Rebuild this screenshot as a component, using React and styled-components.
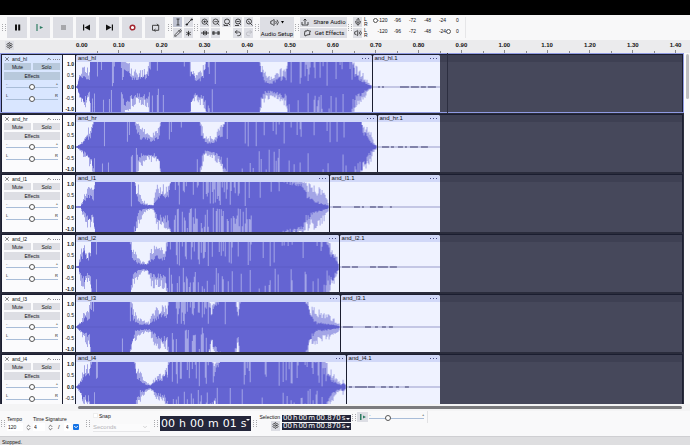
import React from 'react';
import styled, { createGlobalStyle } from 'styled-components';
import {
  Asterisk,
  ChevronDown,
  ChevronUp,
  ChevronsUpDown,
  Mic,
  Pencil,
  Redo2,
  Settings,
  Undo2,
  Volume2,
  X,
  ZoomIn,
  ZoomOut,
} from 'lucide-react';

const CLIP_END = 364;
const VIEW_END = 606;

// wave points: [x, body height, peak height, share of lighter columns]
const tracks = [
  {
    name: 'and_hl',
    selected: true,
    split: 296,
    dashes: [[5, 2], [9, 2], [27, 9], [38, 8], [48, 5], [55, 8]],
    wave: [
      [0, 0, 0, 0], [1, 0.05, 0.1, 0], [4, 0.5, 0.75, 0], [9, 0.5, 0.9, 0],
      [13, 0.25, 0.7, 0], [14, 1, 1.3, 0.2], [24, 1.2, 1.3, 0.15],
      [44, 1.2, 1.3, 0.2], [47, 0.7, 1.1, 0.4], [53, 0.5, 1, 0.2],
      [59, 0.35, 0.7, 0], [67, 0.4, 0.8, 0], [72, 0.5, 0.95, 0.2],
      [73, 1.2, 1.3, 0.12], [113, 1.2, 1.3, 0.02], [115, 0.7, 0.95, 0.2],
      [119, 0.3, 0.5, 0], [123, 0.35, 0.7, 0], [128, 0.6, 0.95, 0.2],
      [132, 1.2, 1.3, 0.3], [142, 1.2, 1.3, 0], [182, 1.2, 1.3, 0],
      [185, 0.6, 0.95, 0.1], [189, 0.2, 0.6, 0], [196, 0.18, 0.4, 0],
      [204, 0.35, 0.8, 0], [210, 0.4, 0.8, 0], [212, 1.1, 1.2, 0.2],
      [245, 1.1, 1.2, 0.4], [274, 1.1, 1.2, 0.3], [280, 0.5, 0.95, 0.2],
      [287, 0.2, 0.6, 0], [292, 0.08, 0.2, 0], [296, 0.02, 0.04, 0],
    ],
  },
  {
    name: 'and_hr',
    split: 301,
    dashes: [[4, 7], [13, 3], [20, 5], [27, 2], [32, 8], [43, 7]],
    wave: [
      [0, 0, 0, 0], [4, 0.08, 0.15, 0], [9, 0.3, 0.6, 0],
      [14, 0.5, 0.9, 0], [18, 1, 1.2, 0.2], [28, 1.2, 1.3, 0.06],
      [57, 1.2, 1.3, 0.12], [60, 0.7, 1.1, 0.4], [64, 0.35, 0.9, 0.1],
      [72, 0.3, 0.6, 0], [78, 0.3, 0.7, 0], [83, 0.5, 0.9, 0],
      [86, 1.2, 1.3, 0.08], [122, 1.2, 1.3, 0.02], [126, 0.5, 0.95, 0.1],
      [129, 0.18, 0.4, 0], [137, 0.2, 0.45, 0], [143, 0.4, 0.8, 0],
      [149, 0.9, 1.1, 0.1], [153, 1.2, 1.3, 0.06], [186, 1.2, 1.3, 0.15],
      [195, 1.2, 1.3, 0.4], [214, 1.2, 1.3, 0.3], [222, 1.2, 1.3, 0.12],
      [282, 1.2, 1.3, 0.12], [286, 0.8, 1, 0.3], [291, 0.5, 0.9, 0.1],
      [295, 0.2, 0.6, 0], [298, 0.08, 0.2, 0], [301, 0.03, 0.05, 0],
    ],
  },
  {
    name: 'and_l1',
    split: 253,
    dashes: [[3, 8], [24, 6], [32, 2], [40, 6], [48, 5], [60, 2]],
    wave: [
      [0, 0, 0, 0], [4, 0, 0.02, 0], [8, 0.3, 0.6, 0], [12, 0.5, 0.9, 0],
      [17, 0.35, 0.7, 0], [19, 1.1, 1.3, 0.2], [24, 1.2, 1.3, 0],
      [56, 1.2, 1.3, 0.06], [59, 0.8, 1, 0.3], [62, 0.2, 0.9, 0],
      [67, 0.08, 0.3, 0], [72, 0.05, 0.1, 0], [77, 0.05, 0.1, 0],
      [80, 0.4, 0.9, 0], [86, 0.5, 0.98, 0], [92, 0.5, 0.9, 0],
      [95, 1.1, 1.2, 0.4], [130, 1.1, 1.2, 0.55], [172, 1.1, 1.2, 0.45],
      [180, 1.2, 1.2, 0.05], [205, 1, 1.2, 0.05], [225, 0.8, 1.1, 0.05],
      [230, 0.5, 0.98, 0], [240, 0.2, 0.9, 0], [248, 0.1, 0.6, 0],
      [253, 0.02, 0.15, 0],
    ],
  },
  {
    name: 'and_l2',
    split: 263,
    dashes: [[2, 8], [12, 6], [30, 6], [38, 10], [50, 7]],
    wave: [
      [0, 0, 0, 0], [2, 0.02, 0.04, 0], [5, 0.4, 0.8, 0],
      [8, 0.6, 1, 0], [11, 0.35, 0.6, 0], [14, 0.5, 0.98, 0.2],
      [16, 1.2, 1.3, 0.2], [22, 1.2, 1.3, 0], [53, 1.2, 1.3, 0.02],
      [56, 0.4, 0.95, 0.1], [60, 0.2, 0.6, 0], [65, 0.1, 0.25, 0],
      [71, 0.1, 0.15, 0], [75, 0.35, 0.8, 0], [80, 0.4, 0.95, 0],
      [89, 0.35, 0.9, 0], [92, 1.1, 1.3, 0.3], [115, 1.1, 1.3, 0.45],
      [154, 1.1, 1.3, 0.35], [160, 1.2, 1.3, 0.15], [235, 1.2, 1.3, 0.2],
      [248, 1, 1.3, 0.3], [254, 0.6, 1, 0.2], [258, 0.4, 0.7, 0],
      [261, 0.2, 0.4, 0], [263, 0.03, 0.05, 0],
    ],
  },
  {
    name: 'and_l3',
    split: 264,
    dashes: [[2, 10], [24, 6], [34, 3], [41, 4], [48, 4]],
    wave: [
      [0, 0, 0, 0], [4, 0.15, 0.25, 0], [8, 0.35, 0.7, 0],
      [13, 0.3, 0.9, 0], [15, 1.2, 1.3, 0.2], [20, 1.2, 1.3, 0],
      [52, 1.2, 1.3, 0.02], [56, 0.5, 0.95, 0.1], [59, 0.18, 0.6, 0],
      [66, 0.1, 0.3, 0], [73, 0.08, 0.2, 0], [77, 0.3, 0.7, 0],
      [84, 0.5, 0.95, 0], [91, 0.5, 0.95, 0], [93, 1.1, 1.3, 0.35],
      [112, 1.1, 1.3, 0.55], [130, 1.1, 1.3, 0.5], [135, 0.6, 0.95, 0.1],
      [140, 0.8, 1.1, 0], [146, 1.1, 1.3, 0], [157, 1.1, 1.3, 0.1],
      [162, 0.5, 0.9, 0], [165, 1.2, 1.3, 0], [227, 1.2, 1.3, 0],
      [233, 0.6, 0.98, 0], [237, 0.3, 0.85, 0], [241, 0.15, 0.75, 0],
      [253, 0.1, 0.5, 0], [264, 0.02, 0.12, 0],
    ],
  },
  {
    name: 'and_l4',
    split: 270,
    cut: true,
    dashes: [[2, 3], [8, 12], [21, 7], [34, 5], [42, 4], [49, 3], [58, 4]],
    wave: [
      [0, 0, 0, 0], [3, 0.1, 0.2, 0], [7, 0.5, 0.9, 0],
      [13, 0.5, 0.95, 0], [17, 1.2, 1.3, 0.2], [24, 1.2, 1.3, 0.03],
      [57, 1.2, 1.3, 0.02], [60, 0.5, 0.95, 0.1], [65, 0.25, 0.6, 0],
      [69, 0.1, 0.25, 0], [74, 0.03, 0.08, 0], [80, 0.25, 0.5, 0],
      [87, 0.35, 0.6, 0], [91, 0.6, 0.95, 0.1], [94, 1.1, 1.3, 0.3],
      [110, 1.1, 1.3, 0.5], [134, 1.1, 1.3, 0.4], [138, 0.6, 0.95, 0.1],
      [145, 1.1, 1.2, 0.1], [200, 1.1, 1.3, 0.12], [212, 1.1, 1.3, 0.4],
      [246, 1, 1.3, 0.4], [253, 0.4, 0.9, 0.1], [260, 0.15, 0.4, 0],
      [265, 0.05, 0.12, 0], [267, 0.15, 0.3, 0], [270, 0.03, 0.05, 0],
    ],
  },
];

const createRandom = (seed) => {
  let value = seed;
  return () => {
    value = (value * 16807) % 2147483647;
    return value / 2147483647;
  };
};

const buildWave = (points, width, seed) => {
  const random = createRandom(seed * 7919 + 13);
  let body = '';
  let peak = '';
  let index = 0;
  for (let x = 0; x < width; x += 1) {
    while (index < points.length - 2 && points[index + 1][0] <= x) index += 1;
    const from = points[index];
    const to = points[index + 1];
    const part = Math.min(1, (x - from[0]) / (to[0] - from[0]));
    const [inner, outer, streak] = [1, 2, 3].map(
      (k) => from[k] + (to[k] - from[k]) * part,
    );
    const heights = [0, 1].map(() => {
      const rough = outer < 1 ? 0.5 : 0.15;
      const high = Math.min(1, outer * (1 - random() * rough));
      let low = Math.min(high, inner * (1.2 - random() * (rough + 0.1)));
      if (random() < streak) low *= random() * 0.9;
      return [low * 25, high * 25];
    });
    const [[lowUp, highUp], [lowDown, highDown]] = heights;
    peak += `M${x} ${25 - highUp}h1V${26 + highDown}h-1z`;
    body += `M${x} ${25 - lowUp}h1V${26 + lowDown}h-1z`;
  }
  return { body, peak };
};

const Waveform = ({ points, width, seed }) => {
  const { body, peak } = buildWave(points, width, seed);
  return (
    <Wave viewBox={`0 0 ${width} 51`} preserveAspectRatio="none">
      <path d={peak} fill="#a3a5e6" />
      <path d={body} fill="#6464d2" />
      <path d={`M0 25h${width}v1H0z`} fill="#5555bd" opacity="0.5" />
    </Wave>
  );
};

const Silence = ({ dashes, width }) => (
  <Wave viewBox={`0 0 ${width} 51`} preserveAspectRatio="none">
    <path d={`M0 25h${width}v1H0z`} fill="#9a9ccb" />
    {dashes.map(([x, length]) => (
      <path key={x} d={`M${x} 25h${length}v1h-${length}z`} fill="#3f4070" />
    ))}
  </Wave>
);

const Clip = ({ title, size, children }) => (
  <ClipBox style={{ flexGrow: size }}>
    <ClipHeader>
      <span>{title}</span>
      <Dots />
    </ClipHeader>
    {children}
  </ClipBox>
);

const TrackPanel = ({ name, selected }) => (
  <Panel $selected={selected}>
    <PanelTitle>
      <X size={6} />
      <PanelName>{name}</PanelName>
      <ChevronUp size={6} />
      <Dots $muted />
    </PanelTitle>
    <PanelButtons>
      <PanelButton $selected={selected}>Mute</PanelButton>
      <PanelButton $selected={selected}>Solo</PanelButton>
      <PanelButton $selected={selected} $wide>
        Effects
      </PanelButton>
    </PanelButtons>
    <SliderLabel>
      <Marks>
        <span>-</span>
        <span>+</span>
      </Marks>
      <Range type="range" defaultValue="50" aria-label={`${name} gain`} />
    </SliderLabel>
    <SliderLabel>
      <Marks>
        <span>L</span>
        <span>R</span>
      </Marks>
      <Range type="range" defaultValue="50" aria-label={`${name} pan`} />
    </SliderLabel>
  </Panel>
);

const Track = ({ track, seed }) => (
  <TrackRow $selected={track.selected}>
    <TrackPanel name={track.name} selected={track.selected} />
    <Scale>
      <b>1.0</b>
      <span>0.5</span>
      <b>0.0</b>
      <span>-0.5</span>
      <b>{track.cut ? '\u00a0' : '-1.0'}</b>
    </Scale>
    <Lane>
      <Clip title={track.name} size={track.split}>
        <Waveform points={track.wave} width={track.split} seed={seed} />
      </Clip>
      <Clip title={`${track.name}.1`} size={CLIP_END - track.split}>
        <Silence dashes={track.dashes} width={CLIP_END - track.split} />
      </Clip>
      <EmptyLane style={{ flexGrow: VIEW_END - CLIP_END }} />
    </Lane>
  </TrackRow>
);

const Grip = () => (
  <svg width="4" height="7" viewBox="0 0 4 7" fill="#a9a9ad">
    <path d="M0 0h1v1H0zM3 0h1v1H3zM0 2h1v1H0zM3 2h1v1H3zM0 4h1v1H0zM3 4h1v1H3zM0 6h1v1H0zM3 6h1v1H3z" />
  </svg>
);

const transport = [
  ['Pause', <path d="M3 2.5h2v6H3zM6.200 2.500h2v6h-2z" fill="#111" />],
  [
    'Play',
    <>
      <path d="M2 2v7" stroke="#2f7d63" strokeWidth="1.200" />
      <path d="M4.800 4l3.400 1.500-3.400 1.500z" fill="#2f7d63" />
    </>,
  ],
  ['Stop', <path d="M3 3h5v5H3z" fill="#a7a7ab" />],
  ['Skip to start', <path d="M2 2.500h1.200v6H2zM9 2.500v6L3.500 5.500z" fill="#111" />],
  ['Skip to end', <path d="M9 2.500H7.800v6H9zM2 2.500v6l5.500-3z" fill="#111" />],
  [
    'Record',
    <circle cx="5.500" cy="5.500" r="2.300" fill="#fff" stroke="#a3252f" strokeWidth="1.500" />,
  ],
  [
    'Loop',
    <path
      d="M4 8.300H2.500v-5H8M7 1.800l1.500 1.500M7 3.300h1.700v5H4.500M5.500 7l-1.500 1.300 1.500 1.200"
      fill="none"
      stroke="#333"
      strokeWidth=".9"
    />,
  ],
];

const Glyph = ({ d, fill = 'none' }) => (
  <svg width="8" height="8" viewBox="0 0 8 8" fill={fill} stroke="#222" strokeWidth=".8">
    <path d={d} />
  </svg>
);

const tools = [
  ['Selection', <Glyph d="M2.500 1h3M4 1v6M2.500 7h3" />],
  ['Envelope', <Glyph fill="#222" d="M1 6h1.500v1H1zM6 1h1.500v1H6zM2 6.500L4 4l2.500-2.500" />],
  ['Draw', <Pencil size={8} />],
  ['Multi-tool', <Asterisk size={9} />],
];

const editTools = [
  ['Zoom in', <ZoomIn size={8} />],
  ['Zoom out', <ZoomOut size={8} />],
  ['Fit selection', <Glyph d="M1.500 3.500a2.500 2.500 0 1 1 5 0a2.500 2.500 0 0 1-5 0M5.500 5.500L7 7M1 6v1.500h4" />],
  ['Fit project', <Glyph d="M1.500 3.500a2.500 2.500 0 1 1 5 0a2.500 2.500 0 0 1-5 0M5.500 5.500L7 7M1 7.500h4M2.500 3.500h3" />],
  ['Zoom toggle', <Glyph d="M1.500 3.500a2.500 2.500 0 1 1 5 0a2.500 2.500 0 0 1-5 0M5.500 5.500L7.500 7.500M3 3l2 1.500" />],
  ['Trim', <Glyph fill="#222" d="M0 4h8M2.500 2v4M4 1.500v5M5.500 2v4" />],
  ['Silence', <Glyph fill="#222" d="M0 4h8M1 2v4M2 2v4M6 2v4M7 2v4" />],
  null,
  ['Undo', <Undo2 size={8} />],
  ['Redo', <Redo2 size={8} color="#b4b4b9" />],
];

const Meter = ({ icon, label, level }) => (
  <MeterRow>
    <SmallButton aria-label={label}>{icon}</SmallButton>
    <Channels>
      <span>L</span>
      <span>R</span>
    </Channels>
    <MeterScale>
      {['-120', '-96', '-72', '-48', '-24', '0'].map((value) => (
        <span key={value}>{value}</span>
      ))}
      <MeterRange type="range" defaultValue={level} aria-label={`${label} level`} />
    </MeterScale>
  </MeterRow>
);

const Toolbar = () => (
  <TopBar>
    <Grip />
    <Transport>
      {transport.map(([label, icon]) => (
        <TransportButton key={label} aria-label={label}>
          <svg width="11" height="11" viewBox="0 0 11 11">
            {icon}
          </svg>
        </TransportButton>
      ))}
    </Transport>
    <Grip />
    <ToolGrid $columns={2}>
      {tools.map(([label, icon], i) => (
        <SmallButton key={label} aria-label={label} $active={i === 0}>
          {icon}
        </SmallButton>
      ))}
    </ToolGrid>
    <Grip />
    <ToolGrid $columns={5} $padded>
      {editTools.map((tool, i) =>
        tool ? (
          <SmallButton key={tool[0]} aria-label={tool[0]}>
            {tool[1]}
          </SmallButton>
        ) : (
          <span key={i} />
        ),
      )}
    </ToolGrid>
    <Grip />
    <SetupButton>
      <SetupIcons>
        <Volume2 size={9} />
        <svg width="3" height="3" viewBox="0 0 3 3">
          <path d="M0 0h3L1.500 2.500z" />
        </svg>
      </SetupIcons>
      Audio Setup
    </SetupButton>
    <Grip />
    <Stack>
      <WideButton>
        <Glyph d="M1 4v3h6V4M4 6V1M2.500 2.500L4 1l1.500 1.500" />
        Share Audio
      </WideButton>
      <WideButton>
        <Glyph d="M2 2h2l.5-1L6 2l1.500 0-1 2 .5 1.500L4 6 2 7 1.500 5z" />
        Get Effects
      </WideButton>
    </Stack>
    <Grip />
    <MeterStack>
      <Meter icon={<Mic size={8} />} label="Record meter" level={0} />
      <Meter icon={<Volume2 size={8} />} label="Playback meter" level={86} />
    </MeterStack>
  </TopBar>
);

const rulerLabels = Array.from({ length: 15 }, (_, i) => (i / 10).toFixed(2));

const Ruler = () => (
  <RulerRow>
    <RulerCorner aria-label="Timeline options">
      <Settings size={7} />
    </RulerCorner>
    <RulerScale>
      {rulerLabels.map((label) => (
        <RulerMark key={label}>{label}</RulerMark>
      ))}
    </RulerScale>
  </RulerRow>
);

const SmallTime = () => (
  <TimeSmall>
    <span>00</span>
    <span>h</span>
    <span>00</span>
    <span>m</span>
    <span>00.870</span>
    <span>s</span>
    <Arrow />
  </TimeSmall>
);

const BottomToolbar = () => (
  <BottomBar>
    <Grip />
    <TempoGroup>
      <Field $width={26}>
        <label htmlFor="tempo">Tempo</label>
        <FieldRow>
          <NumberInput id="tempo" defaultValue="120" $width={16} />
          <ChevronsUpDown size={7} />
        </FieldRow>
      </Field>
      <Field $width={46}>
        <label htmlFor="beats">Time Signature</label>
        <FieldRow>
          <NumberInput id="beats" defaultValue="4" $width={12} />
          <ChevronsUpDown size={7} />
          <Slash>/</Slash>
          <BeatSelect aria-label="Beat unit" defaultValue="4">
            <option>4</option>
          </BeatSelect>
          <BlueBox>
            <ChevronDown size={6} color="#fff" strokeWidth={4} />
          </BlueBox>
        </FieldRow>
      </Field>
    </TempoGroup>
    <Grip />
    <SnapGroup>
      <SnapLabel>
        <Check type="checkbox" />
        Snap
      </SnapLabel>
      <SnapBox>
        <SnapSelect aria-label="Snap to" disabled>
          <option>Seconds</option>
        </SnapSelect>
        <ChevronDown size={6} color="#aaa" />
      </SnapBox>
    </SnapGroup>
    <Grip />
    <TimeLarge>
      <span>00</span>
      <span>h</span>
      <span>00</span>
      <span>m</span>
      <span>01</span>
      <span>s</span>
      <Arrow $tight />
    </TimeLarge>
    <Grip />
    <SelectionLabel>
      <span>Selection</span>
      <SmallButton aria-label="Selection options">
        <Settings size={7} />
      </SmallButton>
    </SelectionLabel>
    <TimeStack>
      <SmallTime />
      <SmallTime />
    </TimeStack>
    <SpeedGroup>
      <Grip />
      <SpeedButton aria-label="Play at speed">
        <svg width="8" height="8" viewBox="0 0 8 8" fill="#2f7d63">
          <path d="M1 1h1.500v6H1zM4 2.500L7 4 4 5.500z" />
        </svg>
      </SpeedButton>
      <SpeedSlider>
        <Marks>
          <span>-</span>
          <span>+</span>
        </Marks>
        <Range type="range" defaultValue="32" aria-label="Playback speed" />
      </SpeedSlider>
    </SpeedGroup>
  </BottomBar>
);

const App = () => (
  <Window>
    <GlobalStyle />
    <TitleStrip />
    <Toolbar />
    <Ruler />
    <Workspace>
      <TrackList>
        {tracks.map((track, i) => (
          <Track key={track.name} track={track} seed={i + 1} />
        ))}
      </TrackList>
      <VerticalBar>
        <VerticalThumb />
      </VerticalBar>
      <Playhead />
    </Workspace>
    <HorizontalBar>
      <HorizontalThumb />
    </HorizontalBar>
    <BottomToolbar />
    <StatusBar>Stopped.</StatusBar>
  </Window>
);

export default App;

const GlobalStyle = createGlobalStyle`
  * {
    box-sizing: border-box;
  }

  body {
    margin: 0;
    font-family: 'Liberation Sans', Arial, sans-serif;
    font-size: 5px;
    line-height: 6px;
    color: #111;
  }

  button, input, select {
    margin: 0;
    padding: 0;
    border: 0;
    font: inherit;
    color: inherit;
  }

  svg {
    display: block;
    flex: none;
  }
`;

const Window = styled.div`
  display: flex;
  flex-direction: column;
  height: 100vh;
  overflow: hidden;
  background: #f9f9fa;
`;

const TitleStrip = styled.div`
  flex: none;
  height: 15px;
  background: #000;
`;

const TopBar = styled.div`
  display: flex;
  flex: none;
  align-items: center;
  gap: 1px;
  height: 25px;
  padding-left: 2px;
  background: #f8f8f9;
`;

const Transport = styled.div`
  display: flex;
  gap: 3px;
  margin-right: 2px;
`;

const Button = styled.button`
  display: flex;
  align-items: center;
  justify-content: center;
  background: #dddee4;
`;

const TransportButton = styled(Button)`
  width: 20px;
  height: 21px;
`;

const SmallButton = styled(Button)`
  width: 9px;
  height: 10px;
  background: ${({ $active }) => ($active ? '#bfc3d2' : '#dddee4')};
`;

const ToolGrid = styled.div`
  display: grid;
  grid-template-columns: repeat(${({ $columns }) => $columns}, 9px);
  gap: 1px 2px;
  padding: 0 ${({ $padded }) => ($padded ? '1px' : '0')};
`;

const SetupButton = styled(Button)`
  flex-direction: column;
  gap: 4px;
  width: 34px;
  height: 21px;
  font-family: Roboto, sans-serif;
  font-size: 6px;
  white-space: nowrap;
`;

const SetupIcons = styled.span`
  display: flex;
  align-items: center;
  gap: 2px;
`;

const Stack = styled.div`
  display: flex;
  flex-direction: column;
  gap: 1px;
`;

const WideButton = styled(Button)`
  gap: 4px;
  width: 47px;
  height: 10px;
  font-family: Roboto, sans-serif;
  font-size: 6px;
  white-space: nowrap;
`;

const MeterStack = styled(Stack)`
  border-right: 1px solid #e6e6e8;
`;

const MeterRow = styled.div`
  display: flex;
  height: 10px;
`;

const Channels = styled.div`
  display: flex;
  flex-direction: column;
  width: 13px;
  padding-left: 2px;
  line-height: 5px;
`;

const MeterScale = styled.div`
  position: relative;
  display: flex;

  span {
    width: 15px;
    text-align: center;
  }
`;

const MeterRange = styled.input`
  position: absolute;
  top: 0;
  left: -2px;
  width: 90px;
  height: 7px;
  appearance: none;
  background: none;

  &::-webkit-slider-thumb {
    appearance: none;
    width: 5px;
    height: 5px;
    border: 1px solid #555;
    border-radius: 50%;
    background: #fff;
  }
`;

const RulerRow = styled.div`
  display: flex;
  flex: none;
  height: 13px;
  overflow: hidden;
  background: #ebebed;
`;

const RulerCorner = styled(Button)`
  flex: none;
  width: 9px;
  height: 9px;
  margin: 1px 62px 0 5px;
`;

const RulerScale = styled.div`
  display: flex;
  flex: 1;
  margin-right: -7px;
`;

const RulerMark = styled.span`
  position: relative;
  flex: 1 0 0;
  padding-top: 2px;
  font-size: 6px;
  font-weight: bold;
  text-align: center;
  background:
    linear-gradient(#888, #888) center bottom / 1px 3px no-repeat,
    linear-gradient(#888, #888) left bottom / 1px 2px no-repeat;

  &:first-child {
    flex-grow: 0.5;
    text-align: left;
    background: none;
  }
`;

const Workspace = styled.div`
  position: relative;
  display: flex;
  flex: 1;
  min-height: 0;
  overflow: hidden;
`;

const TrackList = styled.div`
  flex: 1;
`;

const TrackRow = styled.div`
  display: flex;
  height: 60px;
  padding: 1px 1px 0;
  border: 1px solid ${({ $selected }) => ($selected ? '#8f9ae2' : '#2a2c3c')};
  background: #1b1e30;
`;

const Panel = styled.div`
  flex: none;
  width: 60px;
  padding: 0 2px;
  background: ${({ $selected }) => ($selected ? '#d9e6ff' : '#fbfbfd')};
`;

const PanelTitle = styled.div`
  display: flex;
  align-items: center;
  gap: 1px;
  height: 8px;
`;

const PanelName = styled.span`
  flex: 1;
  padding-left: 1px;
`;

const Dots = styled.i`
  width: 7px;
  height: 1px;
  background: repeating-linear-gradient(
    90deg,
    ${({ $muted }) => ($muted ? '#8b8b95' : '#4c4e86')} 0 1px,
    transparent 1px ${({ $muted }) => ($muted ? '2px' : '3px')}
  );
`;

const PanelButtons = styled.div`
  display: grid;
  grid-template-columns: 1fr 1fr;
  gap: 2px;
`;

const PanelButton = styled(Button)`
  grid-column: ${({ $wide }) => ($wide ? 'span 2' : 'auto')};
  height: ${({ $wide }) => ($wide ? '8px' : '7px')};
  background: ${({ $selected }) => ($selected ? '#b8c9dc' : '#dddee4')};
`;

const SliderLabel = styled.div`
  height: 8px;
  margin: 2px 2px 4px;
`;

const Marks = styled.div`
  display: flex;
  justify-content: space-between;
  height: 4px;
  margin-bottom: -2px;
  font-size: 4px;
  line-height: 4px;
`;

const Range = styled.input`
  display: block;
  width: 100%;
  height: 6px;
  appearance: none;
  background: linear-gradient(#a9bdd8, #a9bdd8) center / 100% 1px no-repeat;

  &::-webkit-slider-thumb {
    appearance: none;
    width: 6px;
    height: 6px;
    border: 1px solid #555;
    border-radius: 50%;
    background: #fff;
  }
`;

const Scale = styled.div`
  display: flex;
  flex: none;
  flex-direction: column;
  align-items: flex-end;
  justify-content: space-between;
  width: 12px;
  margin: 0 1px;
  padding: 6px 1px 0 0;
  background: #fbfbfd;
`;

const Lane = styled.div`
  display: flex;
  flex: 1;
  gap: 1px;
`;

const ClipBox = styled.div`
  display: flex;
  flex: 1 1 0;
  flex-direction: column;
  min-width: 0;
  border-radius: 2px 2px 0 0;
  overflow: hidden;
  background: #eff2ff;
`;

const ClipHeader = styled.div`
  display: flex;
  align-items: center;
  justify-content: space-between;
  height: 7px;
  padding: 0 3px 0 2px;
  font-size: 6px;
  line-height: 7px;
  background: #d1d8f8;
`;

const Wave = styled.svg`
  width: 100%;
  height: 50px;
`;

const EmptyLane = styled.div`
  flex: 1 1 0;
  margin-left: -1px;
  border-top: 7px solid #3e4053;
  background: #46485b;
`;

const VerticalBar = styled.div`
  flex: none;
  width: 6px;
  padding: 1px 1px 0 2px;
  background: #fafafa;
`;

const VerticalThumb = styled.div`
  height: 45px;
  border-radius: 2px;
  background: #bfbfc1;
`;

// sits over the selected track only
const Playhead = styled.div`
  position: absolute;
  top: 0;
  left: 447px;
  width: 1px;
  height: 60px;
  background: #2c2e40;
`;

const HorizontalBar = styled.div`
  flex: none;
  height: 7px;
  padding: 2px 8px 0 78px;
  background: #f4f4f5;
`;

const HorizontalThumb = styled.div`
  height: 3px;
  border-radius: 2px;
  background: #7b7b7e;
`;

const BottomBar = styled.div`
  display: flex;
  flex: none;
  align-items: center;
  gap: 2px;
  height: 25px;
  padding-left: 1px;
  background: #f9f9fa;
`;

const TempoGroup = styled.div`
  display: flex;
  width: 77px;
`;

const Field = styled.div`
  display: flex;
  flex: none;
  flex-direction: column;
  gap: 1px;
  width: ${({ $width }) => $width}px;
  white-space: nowrap;
`;

const FieldRow = styled.div`
  display: flex;
  align-items: center;
  gap: 2px;
  height: 8px;
`;

const NumberInput = styled.input`
  width: ${({ $width }) => $width}px;
  height: 8px;
  padding-left: 1px;
  background: #fff;
`;

const Slash = styled.span`
  padding: 0 2px;
  font-size: 6px;
`;

const BeatSelect = styled.select`
  width: 7px;
  height: 8px;
  padding-left: 2px;
  appearance: none;
  background: #fff;
`;

const BlueBox = styled.span`
  display: flex;
  flex: none;
  align-items: center;
  justify-content: center;
  width: 6px;
  height: 6px;
  border-radius: 1px;
  background: #1473e6;
`;

const SnapGroup = styled.div`
  display: flex;
  flex-direction: column;
  gap: 5px;
  width: 60px;
  padding: 0 2px 3px 1px;
`;

const SnapLabel = styled.label`
  display: flex;
  align-items: center;
  gap: 1px;
`;

const Check = styled.input`
  width: 5px;
  height: 5px;
  appearance: none;
  border: 1px solid #eee;
  background: #fff;
`;

const SnapBox = styled.div`
  display: flex;
  align-items: center;
  height: 8px;
  padding-right: 2px;
  border-bottom: 1px solid #e6e6e8;
  background: #fbfbfc;
`;

const SnapSelect = styled.select`
  flex: 1;
  height: 7px;
  appearance: none;
  background: none;
  font-size: 6px;
  color: #b4b4b9;
  opacity: 1;
`;

const Time = styled.div`
  display: flex;
  align-items: center;
  font-family: 'DejaVu Sans', sans-serif;
  color: #fff;
  background: #24263a;
`;

const TimeLarge = styled(Time)`
  gap: 4px;
  height: 15px;
  padding-left: 1px;
  font-size: 11px;
`;

const TimeSmall = styled(Time)`
  gap: 1px;
  height: 7px;
  padding-left: 1px;
  font-size: 7px;
`;

const Arrow = styled.i`
  align-self: flex-start;
  margin: 3px 1px 0 ${({ $tight }) => ($tight ? '-4px' : '0')};
  border: 2px solid transparent;
  border-top-color: #fff;
  border-bottom: 0;
`;

const SelectionLabel = styled.div`
  display: flex;
  flex-direction: column;
  align-items: flex-end;
  gap: 1px;
  padding-bottom: 3px;
`;

const TimeStack = styled(Stack)`
  margin-right: -1px;
  padding-bottom: 3px;
`;

const SpeedGroup = styled.div`
  display: flex;
  align-items: center;
  align-self: flex-start;
  gap: 1px;
  height: 12px;
  padding-right: 3px;
  border-right: 1px solid #e2e2e4;
`;

const SpeedButton = styled(Button)`
  width: 11px;
  height: 10px;
`;

const SpeedSlider = styled.div`
  width: 55px;
`;

const StatusBar = styled.div`
  flex: none;
  height: 9px;
  padding: 2px;
  border-top: 1px solid #cfcfd2;
  background: #dedee0;
`;
